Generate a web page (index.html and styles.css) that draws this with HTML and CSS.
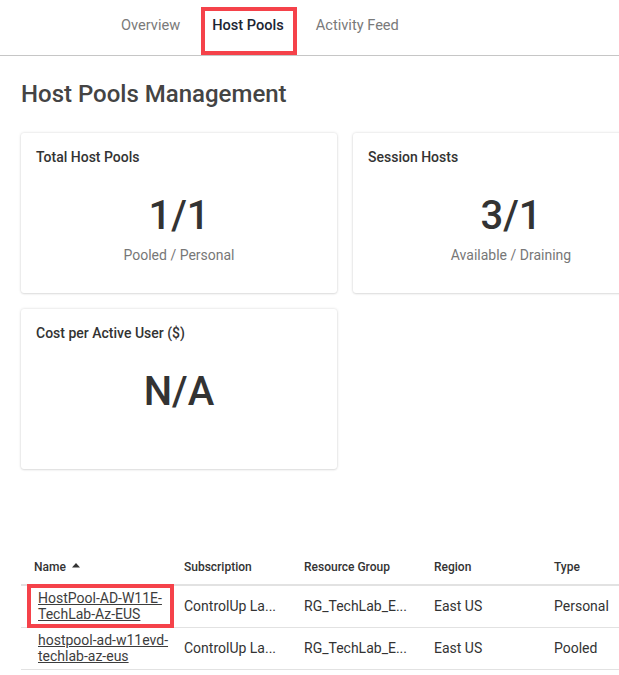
FILE: index.html
```html
<!DOCTYPE html>
<html lang="en">
<head>
<meta charset="utf-8">
<title>Host Pools Management</title>
<link rel="stylesheet" href="styles.css">
</head>
<body>
<div class="page">
  <nav class="tabs">
    <a class="tab">Overview</a>
    <a class="tab active">Host Pools</a>
    <a class="tab">Activity Feed</a>
  </nav>

  <main class="content">
    <h1 class="title">Host Pools Management</h1>

    <div class="cards">
      <section class="card">
        <h2 class="card-title">Total Host Pools</h2>
        <div class="card-value">1/1</div>
        <div class="card-sub">Pooled / Personal</div>
      </section>
      <section class="card">
        <h2 class="card-title">Session Hosts</h2>
        <div class="card-value">3/1</div>
        <div class="card-sub">Available / Draining</div>
      </section>
      <section class="card">
        <h2 class="card-title">Cost per Active User ($)</h2>
        <div class="card-value">N/A</div>
      </section>
    </div>

    <table class="grid">
      <colgroup>
        <col class="c-name">
        <col class="c-sub">
        <col class="c-rg">
        <col class="c-region">
        <col class="c-type">
      </colgroup>
      <thead>
        <tr>
          <th>Name <svg class="sort" width="8" height="6" viewBox="0 0 8 6"><path d="M0 5.5 L4 1 L8 5.5 Z" fill="#333"/></svg></th>
          <th>Subscription</th>
          <th>Resource Group</th>
          <th>Region</th>
          <th>Type</th>
        </tr>
      </thead>
      <tbody>
        <tr>
          <td class="name marked"><a class="link">HostPool-AD-W11E-TechLab-Az-EUS</a></td>
          <td>ControlUp La...</td>
          <td>RG_TechLab_E...</td>
          <td>East US</td>
          <td>Personal</td>
        </tr>
        <tr>
          <td class="name"><a class="link">hostpool-ad-w11evd-techlab-az-eus</a></td>
          <td>ControlUp La...</td>
          <td>RG_TechLab_E...</td>
          <td>East US</td>
          <td>Pooled</td>
        </tr>
      </tbody>
    </table>
  </main>
</div>
</body>
</html>
```

FILE: styles.css
```css
html, body {
  margin: 0;
  padding: 0;
  background: #ffffff;
}
body {
  font-family: Roboto, "Liberation Sans", Arial, sans-serif;
  color: #333333;
  overflow: hidden;
}
.page {
  width: 619px;
  height: 675px;
  overflow: hidden;
}

/* Tabs */
.tabs {
  display: flex;
  height: 55px;
  padding-left: 105px;
  border-bottom: 1px solid #c6c6c6;
}
.tab {
  position: relative;
  padding: 15px 16px 0;
  font-size: 14.6px;
  line-height: 20px;
  color: #7a7a7a;
  white-space: nowrap;
}
.tab.active {
  color: #1b2533;
  font-weight: 500;
}
.tab.active::after {
  content: "";
  position: absolute;
  left: 5px;
  right: 3px;
  top: 7px;
  bottom: 0;
  border: 4px solid #f5424a;
}

/* Content */
.content {
  padding: 0 0 0 21px;
}
.title {
  margin: 22px 0 0;
  font-size: 24px;
  line-height: 32px;
  font-weight: 500;
  color: #444444;
}

.cards {
  display: grid;
  grid-template-columns: 316px 316px;
  gap: 16px;
  margin-top: 23px;
  width: 648px;
}
.card {
  height: 160px;
  box-sizing: border-box;
  padding: 14px 15px 0;
  background: #fff;
  border-radius: 3px;
  box-shadow: 0 0 3px rgba(0, 0, 0, 0.16), 0 1px 2px rgba(0, 0, 0, 0.08);
}
.card-title {
  margin: 0;
  font-size: 14px;
  line-height: 20px;
  font-weight: 500;
  color: #333333;
}
.card-value {
  margin-top: 25px;
  text-align: center;
  font-size: 40px;
  line-height: 48px;
  font-weight: 500;
  color: #333333;
}
.card-sub {
  margin-top: 5px;
  text-align: center;
  font-size: 14px;
  line-height: 20px;
  color: #777777;
}

/* Table */
.grid {
  margin-top: 80px;
  border-collapse: collapse;
  table-layout: fixed;
  width: 650px;
}
.c-name { width: 150px; }
.c-sub { width: 120px; }
.c-rg { width: 130px; }
.c-region { width: 120px; }
.c-type { width: 130px; }

.grid th {
  text-align: left;
  font-size: 12px;
  line-height: 16px;
  font-weight: 500;
  color: #333333;
  padding: 10px 13px 9px;
  border-bottom: 2px solid #e2e2e2;
  white-space: nowrap;
}
.sort {
  margin-left: 3px;
  vertical-align: 3px;
}
.grid td {
  font-size: 14px;
  line-height: 16px;
  color: #333333;
  padding: 4px 13px 5px;
  border-bottom: 1px solid #e2e2e2;
  vertical-align: middle;
  white-space: nowrap;
}
.grid td.name {
  position: relative;
  padding-left: 17px;
  padding-right: 0;
  white-space: normal;
}
.grid td.marked::after {
  content: "";
  position: absolute;
  left: 6px;
  right: -3px;
  top: -2px;
  bottom: -1px;
  border: 4px solid #f5424a;
}
.link {
  color: #3d3d3d;
  text-decoration: underline;
}
```
